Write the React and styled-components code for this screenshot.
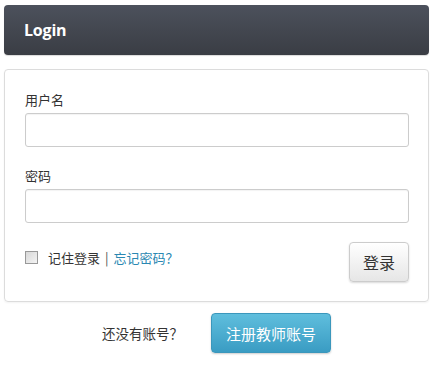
import React from 'react';
import styled, { createGlobalStyle } from 'styled-components';

const GlobalStyle = createGlobalStyle`
    body {
        margin: 0;
        background: #fff;
        font-family: "Noto Sans CJK SC", "Liberation Sans", sans-serif;
        color: #333;
    }
`

const PageWrapper = styled.div`
    width: 433px;
    height: 368px;
    box-sizing: border-box;
    padding: 5px 4px 0 4px;
    display: flex;
    flex-direction: column;
`

const Header = styled.div`
    height: 50px;
    border-radius: 4px;
    background: linear-gradient(to bottom, #4c515c, #3a3d44);
    display: flex;
    align-items: center;
    padding: 0 20px;
    box-shadow: 0 1px 1px rgba(0, 0, 0, 0.15);
`

const Title = styled.h1`
    margin: 0;
    font-family: "Open Sans", "Liberation Sans", sans-serif;
    font-weight: 700;
    font-size: 16px;
    color: #fff;
    letter-spacing: -0.2px;
`

const Card = styled.div`
    margin-top: 14px;
    border: 1px solid #dcdcdc;
    border-radius: 4px;
    padding: 20px 19px 19px 20px;
    display: flex;
    flex-direction: column;
    box-shadow: 0 1px 2px rgba(0, 0, 0, 0.05);
`

const Label = styled.label`
    font-size: 13px;
    line-height: 20px;
    margin-top: ${p => (p.$first ? '0' : '19px')};
    color: #333;
`

const Input = styled.input`
    margin-top: 3px;
    height: 34px;
    box-sizing: border-box;
    border: 1px solid #ccc;
    border-radius: 3px;
    outline: none;
    padding: 0 8px;
    box-shadow: inset 0 1px 1px rgba(0, 0, 0, 0.05);
`

const ActionRow = styled.div`
    margin-top: 19px;
    display: flex;
    align-items: center;
    justify-content: space-between;
`

const Remember = styled.div`
    display: flex;
    align-items: center;
    font-size: 13px;
    color: #333;
    margin-top: -10px;
`

const CheckBox = styled.span`
    width: 11px;
    height: 11px;
    border: 1px solid #999;
    background: linear-gradient(to bottom right, #d8d8d8, #f4f4f4);
    margin-right: 10px;
`

const Sep = styled.span`
    margin: 0 5px;
    color: #555;
`

const Link = styled.a`
    color: #2a88b2;
    text-decoration: none;
`

const LoginButton = styled.button`
    width: 60px;
    height: 40px;
    border: 1px solid #ccc;
    border-radius: 4px;
    background: linear-gradient(to bottom, #ffffff, #e6e6e6);
    box-shadow: 0 1px 2px rgba(0, 0, 0, 0.15);
    font-family: "Noto Sans CJK SC", sans-serif;
    font-size: 16px;
    color: #333;
    padding: 0;
`

const Footer = styled.div`
    flex: 1;
    display: flex;
    align-items: center;
    justify-content: center;
    gap: 28px;
    padding-bottom: 4px;
`

const Question = styled.span`
    font-size: 13.5px;
    color: #333;
`

const RegisterButton = styled.button`
    width: 120px;
    height: 40px;
    border: 1px solid #3b97bc;
    border-radius: 4px;
    background: linear-gradient(to bottom, #5fbedd, #3a9cc3);
    box-shadow: 0 1px 2px rgba(0, 0, 0, 0.2);
    color: #fff;
    font-family: "Noto Sans CJK SC", sans-serif;
    font-size: 15px;
    padding: 0;
`

const App = () => (
    <PageWrapper>
        <GlobalStyle />
        <Header>
            <Title>Login</Title>
        </Header>
        <Card>
            <Label $first>用户名</Label>
            <Input type='text' />
            <Label>密码</Label>
            <Input type='password' />
            <ActionRow>
                <Remember>
                    <CheckBox />
                    记住登录
                    <Sep>|</Sep>
                    <Link href='#'>忘记密码？</Link>
                </Remember>
                <LoginButton>登录</LoginButton>
            </ActionRow>
        </Card>
        <Footer>
            <Question>还没有账号？</Question>
            <RegisterButton>注册教师账号</RegisterButton>
        </Footer>
    </PageWrapper>
);

export default App;
